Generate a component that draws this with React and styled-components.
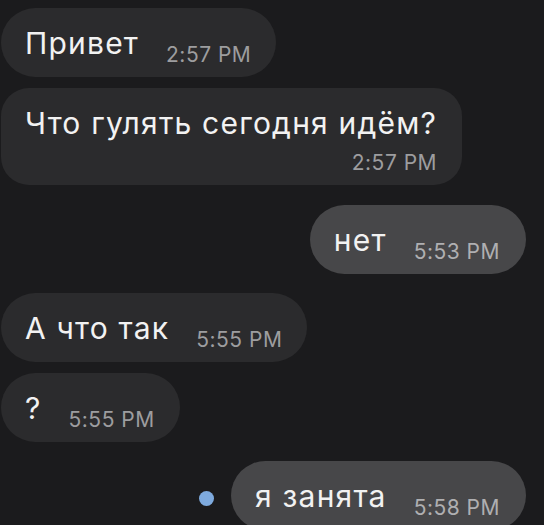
import React from 'react';
import styled, { createGlobalStyle } from 'styled-components';

const GlobalStyle = createGlobalStyle`
    html, body {
        margin: 0;
        padding: 0;
        background: #1b1b1d;
    }
    body {
        font-family: Inter, "Liberation Sans", Arial, sans-serif;
        -webkit-font-smoothing: antialiased;
    }
`

const Chat = styled.div`
    width: 544px;
    height: 525px;
    overflow: hidden;
    box-sizing: border-box;
    padding: 8px 18px 0 1px;
    display: flex;
    flex-direction: column;
    background: #1b1b1d;
`

const Row = styled.div`
    display: flex;
    align-items: center;
    justify-content: ${props => props.$out ? "flex-end" : "flex-start"};
    margin-top: ${props => props.$top}px;
    flex-shrink: 0;
`

const Bubble = styled.div`
    box-sizing: border-box;
    display: flex;
    flex-direction: ${props => props.$wrap ? "column" : "row"};
    align-items: flex-end;
    padding: 17px ${props => props.$out ? 26 : 25}px 10px 24px;
    border-radius: ${props => props.$wrap ? 28 : 35}px;
    background: ${props => props.$out ? "#474749" : "#2b2b2d"};
`

const Text = styled.span`
    align-self: ${props => props.$wrap ? "flex-start" : "auto"};
    font-size: 30px;
    line-height: 36px;
    letter-spacing: 1.2px;
    color: #f2f2f2;
    margin-bottom: 6px;
    white-space: nowrap;
`

const Time = styled.span`
    font-size: 21px;
    line-height: 24px;
    letter-spacing: 0.5px;
    color: ${props => props.$out ? "#afafb1" : "#9d9d9f"};
    margin-left: ${props => props.$wrap ? 0 : 27}px;
    margin-top: ${props => props.$wrap ? 4 : 0}px;
    white-space: nowrap;
`

const Dot = styled.span`
    width: 15px;
    height: 15px;
    border-radius: 50%;
    background: #7eaade;
    margin: 5px 17px 0 0;
`

const messages = [
    { text: "Привет", time: "2:57 PM", top: 0 },
    { text: "Что гулять сегодня идём?", time: "2:57 PM", top: 11, wrap: true },
    { text: "нет", time: "5:53 PM", top: 20, out: true },
    { text: "А что так", time: "5:55 PM", top: 19 },
    { text: "?", time: "5:55 PM", top: 11 },
    { text: "я занята", time: "5:58 PM", top: 19, out: true, unread: true },
]

const App = () => {
    return (
        <>
            <GlobalStyle/>
            <Chat>
                {messages.map((m, i) => (
                    <Row key={i} $out={m.out} $top={m.top}>
                        {m.unread && <Dot/>}
                        <Bubble $out={m.out} $wrap={m.wrap}>
                            <Text $wrap={m.wrap}>{m.text}</Text>
                            <Time $out={m.out} $wrap={m.wrap}>{m.time}</Time>
                        </Bubble>
                    </Row>
                ))}
            </Chat>
        </>
    )
}

export default App;
